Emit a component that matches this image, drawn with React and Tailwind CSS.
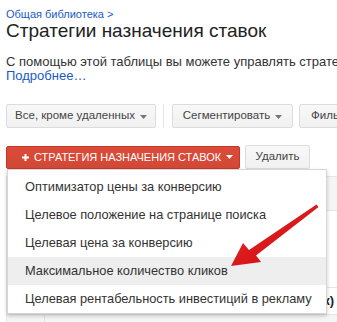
import React from "react";

const Caret = ({ className }) => (
  <svg width="7" height="4" viewBox="0 0 7 4" className={`shrink-0 ${className}`}>
    <path d="M0 0h7L3.5 4z" fill="currentColor" />
  </svg>
);

const GrayButton = ({ children, caret, className = "" }) => (
  <div
    className={`h-[24px] shrink-0 flex items-center gap-x-[5px] px-[11px] rounded-[2px] border border-[#dcdcdc] bg-gradient-to-b from-[#f8f8f8] to-[#f1f1f1] text-[11.5px] text-[#444] ${className}`}
  >
    <span>{children}</span>
    {caret && <Caret className="text-[#777] mt-[1px]" />}
  </div>
);

const menuItems = [
  "Оптимизатор цены за конверсию",
  "Целевое положение на странице поиска",
  "Целевая цена за конверсию",
  "Максимальное количество кликов",
  "Целевая рентабельность инвестиций в рекламу",
];

const App = () => {
  return (
    <div className="relative w-[337px] h-[322px] overflow-hidden bg-white font-['Liberation_Sans',Arial,sans-serif] text-[#222]">
      <div className="pl-[6px]">
        <div className="mt-[7px] h-[14px] leading-[14px] text-[11px] text-[#1a5ac8]">
          Общая библиотека &gt;
        </div>
        <div className="h-[20px] leading-[20px] text-[19px] text-[#222] whitespace-nowrap">
          Стратегии назначения ставок
        </div>
        <div className="mt-[14px] text-[13px] leading-[14px] text-[#333] whitespace-nowrap">
          С помощью этой таблицы вы можете управлять стратегиями назначения ставок.
          <br />
          <span className="text-[#1a5ac8]">Подробнее…</span>
        </div>

        <div className="mt-[21px] flex items-center whitespace-nowrap">
          <GrayButton caret className="w-[150px] justify-center">
            Все, кроме удаленных
          </GrayButton>
          <div className="w-px h-[24px] bg-[#e5e5e5] ml-[7px] mr-[8px] shrink-0"></div>
          <GrayButton caret className="w-[121px] justify-center">
            Сегментировать
          </GrayButton>
          <GrayButton className="ml-[6px]">Фильтр</GrayButton>
        </div>

        <div className="mt-[17px] flex items-center whitespace-nowrap">
          <div className="h-[23px] w-[234px] shrink-0 flex items-center rounded-[2px] border border-[#c53727] bg-gradient-to-b from-[#dd4b39] to-[#d14836] text-white text-[11px] pl-[15px]">
            <svg width="7" height="7" viewBox="0 0 7 7" className="mr-[5px] shrink-0">
              <path d="M2.5 0h2v2.5H7v2H4.5V7h-2V4.5H0v-2h2.5z" fill="#fff" />
            </svg>
            <span>СТРАТЕГИЯ НАЗНАЧЕНИЯ СТАВОК</span>
            <Caret className="ml-[5px] text-white" />
          </div>
          <GrayButton className="ml-[5px] w-[65px] h-[23px] justify-center px-0">Удалить</GrayButton>
        </div>

        <div className="mt-[7px] border-l border-t border-[#e5e5e5]">
          <div className="h-[34px] bg-[#f5f5f5] border-b border-[#e5e5e5]"></div>
          <div className="h-[76px] bg-white"></div>
          <div className="h-[27px] border-t border-[#e5e5e5] flex items-center justify-end pr-[3px] text-[13px] font-bold text-[#222] whitespace-nowrap">
            (ставок)
          </div>
          <div className="h-[30px] bg-[#f5f5f5] border-t border-[#e5e5e5] flex">
            <div className="w-[38px] border-r border-[#e0e0e0]"></div>
            <div className="pl-[56px] pt-[5px] text-[13px] font-bold text-[#222] whitespace-nowrap">
              Итого (по стратегии)
            </div>
          </div>
        </div>
      </div>

      <div className="absolute left-[7px] top-[169px] w-[320px] bg-white border border-[#d6d6d6] shadow-[0_2px_4px_rgba(0,0,0,0.2)] pt-[3px]">
        {menuItems.map((item, i) => (
          <div
            key={i}
            className={`h-[28px] flex items-center pl-[17px] text-[12.8px] text-[#333] whitespace-nowrap ${
              i === 3 ? "bg-[#eeeeee]" : ""
            }`}
          >
            {item}
          </div>
        ))}
      </div>

      <svg className="absolute left-0 top-0" width="337" height="322" viewBox="0 0 337 322">
        <defs>
          <linearGradient id="ar" x1="0" y1="0" x2="1" y2="1">
            <stop offset="0" stopColor="#ec2a2e" />
            <stop offset="1" stopColor="#c8080c" />
          </linearGradient>
        </defs>
        <path
          d="M316.5 204.5 L318.5 207 L256 255.5 L261 262 L231 266 L243 243 L249 250 Z"
          fill="url(#ar)"
        />
      </svg>
    </div>
  );
};

export default App;
